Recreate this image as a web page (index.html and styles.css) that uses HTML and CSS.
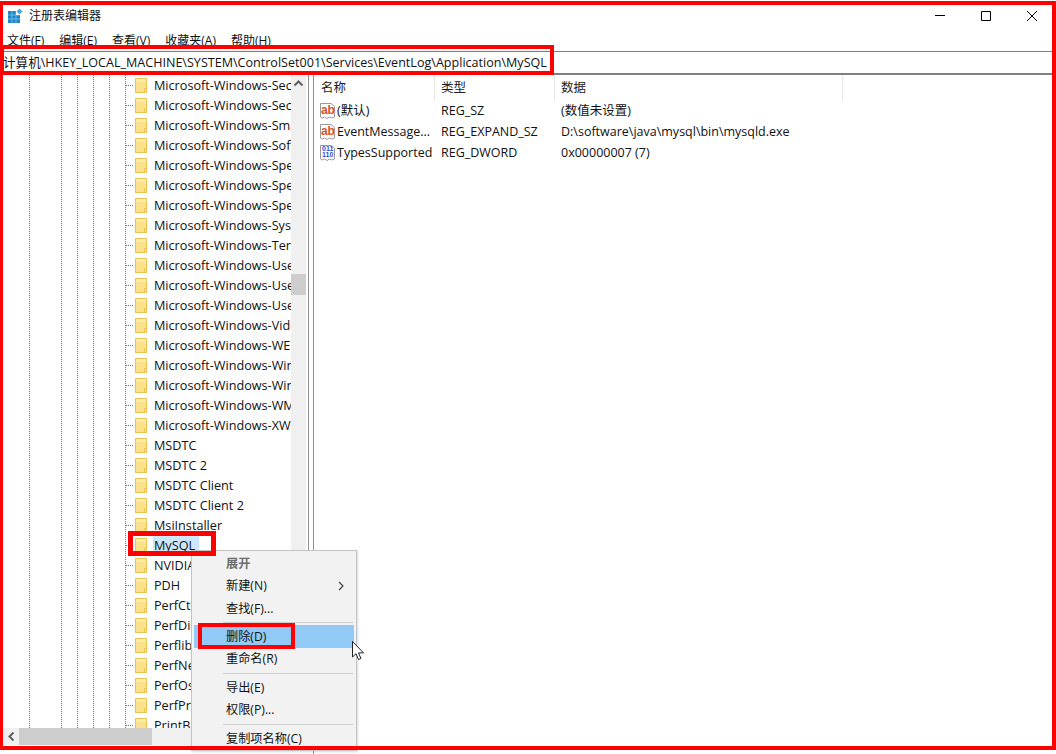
FILE: index.html
```html
<!DOCTYPE html>
<html lang="zh-CN">
<head>
<meta charset="utf-8">
<title>注册表编辑器</title>
<link rel="stylesheet" href="styles.css">
</head>
<body>
<svg class="defs" width="0" height="0" aria-hidden="true">
  <symbol id="folder" viewBox="0 0 12 15">
    <path d="M.5.500h11v14H.5z" fill="#fde08a" stroke="#e8c552"/>
    <path d="M1 1h10v3H1z" fill="#fdeaa8"/>
    <path d="M9.500 10.500h2v4h-2z" fill="#fde99f" stroke="#e8c552"/>
  </symbol>
  <symbol id="page" viewBox="0 0 15 16">
    <path d="M.5.500h10.500l3.500 3v10.500L12 15 9.500 14 7 15.500 4.500 14 2 15 .5 14z" fill="#fff" stroke="#999"/>
  </symbol>
</svg>
<main class="window">
  <header class="titlebar">
    <svg class="appicon" viewBox="0 0 15 15" aria-hidden="true">
      <path d="M0 3h12v12H0z" fill="#1c86c9"/>
      <path d="M4 3v12M8 3v12M0 7h12M0 11h12" stroke="#7cc3ec" stroke-width=".8"/>
      <path d="M8 3h4v4H8z" fill="#fff"/>
      <path d="m8.500 3.500 3-3 3 3-3 3z" fill="#4aa6dc"/>
    </svg>
    <span class="apptitle">注册表编辑器</span>
    <div class="controls">
      <svg viewBox="0 0 46 20" aria-hidden="true"><path d="M18 9.500h10" stroke="#000"/></svg>
      <svg viewBox="0 0 46 20" aria-hidden="true"><path d="M18.500 5.500h9v9h-9z" fill="none" stroke="#000"/></svg>
      <svg viewBox="0 0 46 20" aria-hidden="true"><path d="M18 5l10 10M28 5 18 15" stroke="#000"/></svg>
    </div>
  </header>
  <nav class="menubar">
    <span>文件(F)</span><span>编辑(E)</span><span>查看(V)</span><span>收藏夹(A)</span><span>帮助(H)</span>
  </nav>
  <div class="address">计算机\HKEY_LOCAL_MACHINE\SYSTEM\ControlSet001\Services\EventLog\Application\MySQL</div>
  <div class="panes">
    <section class="treepane">
      <div class="treemain">
        <ul class="tree">
          <li><i></i><svg><use href="#folder"/></svg><span>Microsoft-Windows-Security-Adtk</span></li>
          <li><i></i><svg><use href="#folder"/></svg><span>Microsoft-Windows-Security-Spp</span></li>
          <li><i></i><svg><use href="#folder"/></svg><span>Microsoft-Windows-SmartCard</span></li>
          <li><i></i><svg><use href="#folder"/></svg><span>Microsoft-Windows-Software</span></li>
          <li><i></i><svg><use href="#folder"/></svg><span>Microsoft-Windows-SpellCheck</span></li>
          <li><i></i><svg><use href="#folder"/></svg><span>Microsoft-Windows-Speech</span></li>
          <li><i></i><svg><use href="#folder"/></svg><span>Microsoft-Windows-Speller</span></li>
          <li><i></i><svg><use href="#folder"/></svg><span>Microsoft-Windows-System</span></li>
          <li><i></i><svg><use href="#folder"/></svg><span>Microsoft-Windows-Terminal</span></li>
          <li><i></i><svg><use href="#folder"/></svg><span>Microsoft-Windows-User</span></li>
          <li><i></i><svg><use href="#folder"/></svg><span>Microsoft-Windows-User</span></li>
          <li><i></i><svg><use href="#folder"/></svg><span>Microsoft-Windows-User</span></li>
          <li><i></i><svg><use href="#folder"/></svg><span>Microsoft-Windows-Video</span></li>
          <li><i></i><svg><use href="#folder"/></svg><span>Microsoft-Windows-WEB</span></li>
          <li><i></i><svg><use href="#folder"/></svg><span>Microsoft-Windows-Windows</span></li>
          <li><i></i><svg><use href="#folder"/></svg><span>Microsoft-Windows-Winlogon</span></li>
          <li><i></i><svg><use href="#folder"/></svg><span>Microsoft-Windows-WMI</span></li>
          <li><i></i><svg><use href="#folder"/></svg><span>Microsoft-Windows-XWizard</span></li>
          <li><i></i><svg><use href="#folder"/></svg><span>MSDTC</span></li>
          <li><i></i><svg><use href="#folder"/></svg><span>MSDTC 2</span></li>
          <li><i></i><svg><use href="#folder"/></svg><span>MSDTC Client</span></li>
          <li><i></i><svg><use href="#folder"/></svg><span>MSDTC Client 2</span></li>
          <li><i></i><svg><use href="#folder"/></svg><span>MsiInstaller</span></li>
          <li class="picked"><i></i><svg><use href="#folder"/></svg><span>MySQL</span></li>
          <li><i></i><svg><use href="#folder"/></svg><span>NVIDIA Corporation</span></li>
          <li><i></i><svg><use href="#folder"/></svg><span>PDH</span></li>
          <li><i></i><svg><use href="#folder"/></svg><span>PerfCtrs</span></li>
          <li><i></i><svg><use href="#folder"/></svg><span>PerfDisk</span></li>
          <li><i></i><svg><use href="#folder"/></svg><span>Perflib</span></li>
          <li><i></i><svg><use href="#folder"/></svg><span>PerfNet</span></li>
          <li><i></i><svg><use href="#folder"/></svg><span>PerfOs</span></li>
          <li><i></i><svg><use href="#folder"/></svg><span>PerfProc</span></li>
          <li><i></i><svg><use href="#folder"/></svg><span>PrintBrm</span></li>
        </ul>
        <div class="vscroll">
          <svg class="arrow" viewBox="0 0 15 17" aria-hidden="true"><path d="m3.500 10.500 4-4 4 4" fill="none" stroke="#606060" stroke-width="2"/></svg>
          <div class="vthumb"></div>
        </div>
      </div>
      <div class="hscroll">
        <svg class="arrow" viewBox="0 0 15 17" aria-hidden="true"><path d="m9.500 4.500-4 4 4 4" fill="none" stroke="#606060" stroke-width="2"/></svg>
        <div class="hthumb"></div>
      </div>
    </section>
    <section class="listpane">
      <div class="row head"><span class="c1">名称</span><span class="c2">类型</span><span class="c3">数据</span></div>
      <div class="row">
        <span class="c1"><span class="valicon"><svg><use href="#page"/></svg><b class="ab">ab</b></span>(默认)</span>
        <span class="c2">REG_SZ</span><span class="c3">(数值未设置)</span>
      </div>
      <div class="row">
        <span class="c1"><span class="valicon"><svg><use href="#page"/></svg><b class="ab">ab</b></span>EventMessage...</span>
        <span class="c2">REG_EXPAND_SZ</span><span class="c3">D:\software\java\mysql\bin\mysqld.exe</span>
      </div>
      <div class="row">
        <span class="c1"><span class="valicon"><svg><use href="#page"/></svg><b class="bin">011<br>110</b></span>TypesSupported</span>
        <span class="c2">REG_DWORD</span><span class="c3">0x00000007 (7)</span>
      </div>
    </section>
  </div>

  <div class="menu">
    <div class="item muted">展开</div>
    <div class="item tall">新建(N)<svg class="more" viewBox="0 0 6 10" aria-hidden="true"><path d="m1 1 4 4-4 4" fill="none" stroke="#444" stroke-width="1.200"/></svg></div>
    <div class="item">查找(F)...</div>
    <hr class="tight">
    <div class="item active">删除(D)</div>
    <div class="item">重命名(R)</div>
    <hr>
    <div class="item">导出(E)</div>
    <div class="item">权限(P)...</div>
    <hr>
    <div class="item">复制项名称(C)</div>
  </div>
  <svg class="cursor" viewBox="0 0 13 20" aria-hidden="true"><path d="M.5.500v15.500l3.500-3.300 2.500 5.800 2.500-1-2.500-5.600h5z" fill="#fff" stroke="#222"/></svg>

  <div class="mark mark-frame"></div>
  <div class="mark mark-address"></div>
  <div class="mark mark-mysql"></div>
  <div class="mark mark-delete"></div>
</main>
</body>
</html>
```
FILE: styles.css
```css
* { box-sizing: border-box; }
html, body { margin: 0; padding: 0; background: #fff; }
body {
  width: 1056px;
  height: 754px;
  overflow: hidden;
  font: 12.500px/20px "Open Sans", "Noto Sans CJK SC", sans-serif;
  color: #111;
}
.defs { position: absolute; }
.window {
  position: relative;
  width: 1056px;
  height: 754px;
  display: flex;
  flex-direction: column;
  overflow: hidden;
}
.titlebar {
  height: 31px;
  flex: none;
  display: flex;
  align-items: center;
  padding: 0 0 0 8px;
}
.appicon { width: 15px; height: 15px; margin-right: 6px; }
.apptitle { font-size: 12px; }
.controls { margin-left: auto; display: flex; padding-right: 1px; }
.controls svg { width: 46px; height: 20px; }
.menubar {
  height: 21px;
  flex: none;
  display: flex;
  gap: 15px;
  padding: 0 0 0 7px;
  align-items: center;
  font-size: 12px;
  border-bottom: 1px solid #808080;
}
.address {
  height: 23px;
  flex: none;
  padding: 0 0 0 3px;
  font-size: 12.570px;
  line-height: 21px;
  white-space: nowrap;
  border-bottom: 2px solid #808080;
}
.panes { flex: 1; min-height: 0; display: flex; }
.treepane {
  width: 309px;
  flex: none;
  height: 670px;
  padding-right: 2px;
  border-right: 1px solid #909090;
  display: flex;
  flex-direction: column;
}
.treemain { flex: 1; min-height: 0; display: flex; }
.tree {
  width: 291px;
  flex: none;
  margin: 0;
  padding: 0 0 0 126px;
  list-style: none;
  overflow: hidden;
  font-size: 12.650px;
  background-image:
    linear-gradient(#777 50%, transparent 50%),
    linear-gradient(#777 50%, transparent 50%),
    linear-gradient(#777 50%, transparent 50%),
    linear-gradient(#777 50%, transparent 50%),
    linear-gradient(#777 50%, transparent 50%),
    linear-gradient(#777 50%, transparent 50%);
  background-size: 1px 2px;
  background-repeat: repeat-y;
  background-position: 29px 0, 61px 0, 77px 0, 93px 0, 109px 0, 125px 0;
}
.tree li { height: 20px; flex: none; display: flex; align-items: center; white-space: nowrap; }
.tree li i {
  width: 7px;
  height: 1px;
  flex: none;
  margin-right: 2px;
  background: linear-gradient(90deg, #777 50%, transparent 50%) 0 0 / 2px 1px;
}
.tree li svg { width: 12px; height: 15px; flex: none; margin-right: 6px; }
.tree li span { padding: 0 1px; }
.tree .picked span { background: #cce8ff; width: 46px; }
.vscroll { width: 15px; flex: none; background: #f0f0f0; }
.arrow { display: block; width: 15px; height: 17px; flex: none; }
.vthumb { width: 15px; height: 21px; margin-top: 182px; background: #cdcdcd; }
.hscroll { height: 17px; flex: none; background: #f0f0f0; display: flex; padding-left: 4px; }
.hthumb { width: 133px; height: 17px; background: #cdcdcd; }
.listpane {
  flex: 1;
  margin-left: 4px;
  border-left: 1px solid #909090;
}
.row { display: flex; height: 21px; line-height: 21px; white-space: nowrap; }
.row > span { display: flex; align-items: center; flex: none; padding-left: 6px; overflow: hidden; }
.row .c1 { width: 121px; }
.row .c2 { width: 120px; }
.row .c3 { width: 288px; }
.head { height: 25px; color: #222; }
.head > span { border-right: 1px solid #e5e5e5; }
.head .c1 { padding-left: 7px; }
.valicon { position: relative; width: 15px; height: 16px; margin-right: 2px; flex: none; }
.valicon svg { display: block; width: 15px; height: 16px; }
.valicon b {
  position: absolute;
  left: 1px;
  top: 2px;
  font-family: "Liberation Sans", sans-serif;
  font-weight: 700;
}
.ab { color: #d9502a; font-size: 12px; line-height: 11px; letter-spacing: -.2px; }
.valicon .bin { color: #2b50d8; font-size: 7px; line-height: 6px; left: 2px; top: 1px; letter-spacing: 0; }
.menu {
  position: absolute;
  left: 191px;
  top: 550px;
  width: 166px;
  height: 201px;
  padding: 2px;
  background: #f2f2f2;
  border: 1px solid #c4c4c4;
  box-shadow: 1px 1px 2px rgba(0,0,0,.15);
  font-size: 12.200px;
}
.item {
  position: relative;
  height: 22px;
  line-height: 22px;
  padding-left: 32px;
  white-space: nowrap;
  color: #111;
}
.item.tall { height: 23px; }
.item.muted { color: #6d6d6d; font-weight: 700; }
.item.active { background: #91c9f7; height: 23px; line-height: 23px; }
.more { position: absolute; right: 10px; top: 6px; width: 6px; height: 10px; }
.menu hr {
  margin: 3px 1px 3px 29px;
  height: 1px;
  border: 0;
  background: #cfcfcf;
}
.menu hr.tight { margin: 2px 1px 2px 29px; }
.cursor { position: absolute; left: 352px; top: 641px; width: 13px; height: 20px; }
.mark { position: absolute; border: 4px solid #f00; pointer-events: none; }
.mark-frame { left: 0; top: 1px; width: 1056px; height: 749px; border-left-width: 3px; }
.mark-address { left: 0; top: 45px; width: 554px; height: 30px; }
.mark-mysql { left: 128px; top: 531px; width: 88px; height: 25px; border-width: 5px; }
.mark-delete { left: 198px; top: 623px; width: 97px; height: 26px; }
```
